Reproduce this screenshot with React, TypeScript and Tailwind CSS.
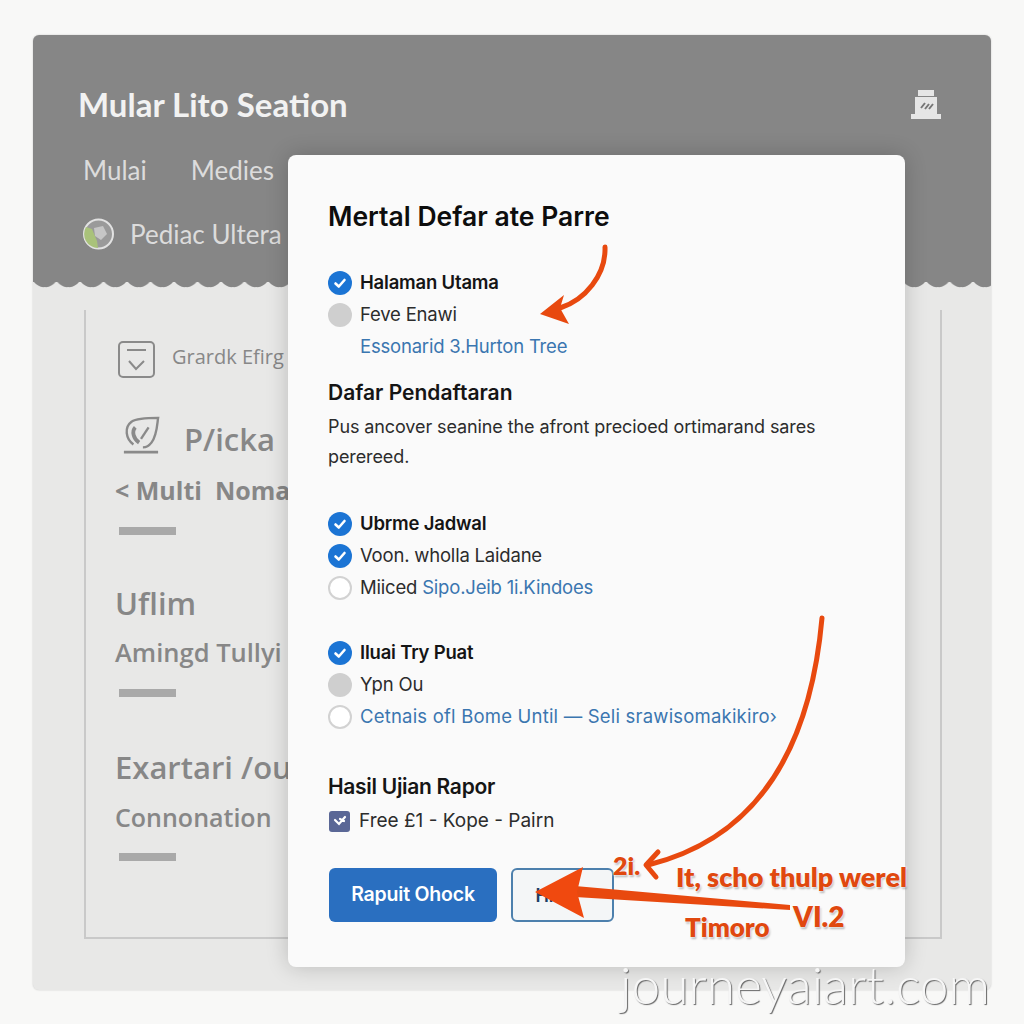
function Check({ kind }: { kind: "on" | "gray" | "off" }) {
  if (kind === "gray") return <span className="w-6 h-6 rounded-full bg-[#cfcfcf] shrink-0" />;
  if (kind === "off") return <span className="w-6 h-6 rounded-full bg-white border-2 border-[#d2d2d2] shrink-0" />;
  return (
    <span className="w-6 h-6 rounded-full bg-[#1b74d4] shrink-0 flex items-center justify-center">
      <svg width="14" height="14" viewBox="0 0 14 14" fill="none" stroke="#fff" strokeWidth="2.6" strokeLinecap="round" strokeLinejoin="round">
        <path d="M2.5 7.5 L5.8 10.5 L11.5 4" />
      </svg>
    </span>
  );
}

function Row({ kind, children, bold }: { kind: "on" | "gray" | "off"; children: React.ReactNode; bold?: boolean }) {
  return (
    <div className={`h-8 flex items-center gap-2 text-[18.5px] tracking-[-0.2px] text-[#2c2c2c] ${bold ? "font-semibold text-[#151515]" : ""}`}>
      <Check kind={kind} />
      <span className="whitespace-nowrap">{children}</span>
    </div>
  );
}

function Bar() {
  return <div className="w-[57px] h-2 bg-[#a9a9a9] ml-1" />;
}

export default function App() {
  const orange = "font-['Lato',sans-serif] font-extrabold text-[#e0480f] [text-shadow:0_0_2px_#fff,0_0_3px_#fff,1px_2px_2px_rgba(0,0,0,0.3)]";
  return (
    <div className="relative w-[1024px] h-[1024px] overflow-hidden bg-[#f8f8f7] pt-[35px] pl-[33px] font-['Inter',sans-serif]">
      <div className="w-[958px] h-[955px] rounded-md overflow-hidden bg-[#e8e8e7] flex flex-col shadow-[0_0_2px_rgba(0,0,0,0.2)]">
        {/* header */}
        <header className="relative h-[247px] shrink-0 bg-[#868686] font-['Lato',sans-serif] pl-[45px]">
          <div className="flex items-center justify-between pr-[50px] pt-[50px]">
            <h1 className="text-[33px] leading-[38px] font-bold text-[#f2f2f2]">Mular Lito Seation</h1>
            <svg width="30" height="30" viewBox="0 0 30 30" fill="#e6e6e6">
              <path d="M7 1 h16 v6 h-16z" />
              <path d="M4 8 h22 v17 h-22z" />
              <path d="M0 25 h30 v5 h-30z" />
              <path d="M10 19 l4 -5 M14 20 l4 -5 M18 20 l4 -5" stroke="#777" strokeWidth="2" />
            </svg>
          </div>
          <nav className="flex gap-[44px] pl-[5px] mt-[32px] text-[26px] leading-[30px] text-[#dcdcdc]">
            <span>Mulai</span>
            <span>Medies</span>
          </nav>
          <div className="flex items-center gap-[16px] pl-[5px] mt-[32px] text-[26px] leading-[34px] text-[#dcdcdc]">
            <svg width="31" height="34" viewBox="0 0 31 34">
              <circle cx="15.5" cy="17" r="14.5" fill="#9a9a9a" stroke="#e2e2e2" strokeWidth="2" />
              <path d="M15 31 A14 14 0 0 1 3 10 L9 12 L14 24Z" fill="#a9c27a" />
              <path d="M11 11 l9 -2 l4 8 l-6 6 l-6 -4z" fill="#c6c6c6" />
            </svg>
            <span className="whitespace-nowrap">Pediac Ultera</span>
          </div>
          <svg className="absolute left-0 -bottom-[6px] w-full h-2" viewBox="0 0 958 8" preserveAspectRatio="none">
            <pattern id="wave" width="23.5" height="8" patternUnits="userSpaceOnUse">
              <path d="M0 0 H23.5 V1 Q17.6 8 11.75 7 Q5.9 8 0 1Z" fill="#868686" />
            </pattern>
            <rect width="958" height="8" fill="url(#wave)" />
          </svg>
        </header>

        {/* body panel behind the dialog */}
        <div className="flex-1 pl-[51px] pr-[49px] pt-[28px] pb-[51px]">
          <div className="h-full border-x-2 border-b-2 border-[#c9c9c9] pl-[29px] pt-[31px] text-[#878787] font-['Open_Sans',sans-serif] overflow-hidden">
            <div className="flex items-center gap-[17px] pl-[3px]">
              <svg width="37" height="37" viewBox="0 0 37 37" fill="none" stroke="#8a8a8a" strokeWidth="2">
                <rect x="1" y="1" width="35" height="35" rx="4" />
                <path d="M9 9 H28 M11 20 L18 28 L26 20" />
              </svg>
              <span className="text-[20px] leading-[24px] pb-[6px] whitespace-nowrap">Grardk Efirg</span>
            </div>
            <div className="flex items-start gap-[24px] pl-[7px] mt-[38px]">
              <svg width="38" height="38" viewBox="0 0 40 40" fill="none" stroke="#8a8a8a" strokeWidth="2.5">
                <path d="M12 30 C4 24 2 12 10 6 C16 2 30 2 38 2 C37 8 37 20 31 28 C28 32 24 33 22 33" />
                <path d="M28 12 L20 24" />
                <path d="M14 12 C10 16 12 24 18 28" strokeWidth="4" />
                <path d="M2 38 H38" strokeWidth="3" />
              </svg>
              <span className="text-[31px] leading-[38px] pt-[4px] font-semibold whitespace-nowrap">P/icka</span>
            </div>
            <div className="mt-[17px] text-[25px] leading-[30px] font-bold whitespace-nowrap">&lt; Multi&nbsp; Noma</div>
            <div className="mt-[22px]"><Bar /></div>
            <div className="mt-[49px] text-[31px] leading-[38px] font-semibold">Uflim</div>
            <div className="mt-[15px] text-[25.5px] leading-[30px] font-semibold whitespace-nowrap">Amingd Tullyi</div>
            <div className="mt-[22px]"><Bar /></div>
            <div className="mt-[51px] text-[31px] leading-[38px] font-semibold whitespace-nowrap">Exartari /our</div>
            <div className="mt-[16px] text-[25px] leading-[30px] font-semibold">Connonation</div>
            <div className="mt-[21px]"><Bar /></div>
          </div>
        </div>
      </div>

      {/* dialog */}
      <div className="absolute left-[288px] top-[155px] w-[617px] h-[812px] rounded-lg bg-[#fafafa] shadow-[0_0_22px_rgba(0,0,0,0.2)] pl-[40px] pt-[45px]">
        <h2 className="text-[26.5px] leading-[32px] font-semibold text-[#0d0d0d]">Mertal Defar ate Parre</h2>
        <div className="mt-[35px]">
          <Row kind="on" bold>Halaman Utama</Row>
          <Row kind="gray">Feve Enawi</Row>
          <div className="h-8 flex items-center pl-8 text-[18.5px] tracking-[-0.2px] text-[#3a76b0]">Essonarid 3.Hurton Tree</div>
        </div>
        <h3 className="mt-[16px] text-[21px] leading-[28px] font-semibold text-[#151515]">Dafar Pendaftaran</h3>
        <p className="mt-[5px] w-[520px] text-[18px] leading-[30px] tracking-[-0.1px] text-[#2c2c2c]">
          Pus ancover seanine the afront precioed ortimarand sares perereed.
        </p>
        <div className="mt-[36px]">
          <Row kind="on" bold>Ubrme Jadwal</Row>
          <Row kind="on">Voon. wholla Laidane</Row>
          <Row kind="off">Miiced <span className="text-[#3a76b0]">Sipo.Jeib 1i.Kindoes</span></Row>
        </div>
        <div className="mt-[33px]">
          <Row kind="on" bold>Iluai Try Puat</Row>
          <Row kind="gray">Ypn Ou</Row>
          <Row kind="off"><span className="text-[#3a76b0] tracking-[0.2px]">Cetnais ofl Bome Until — Seli srawisomakikiro›</span></Row>
        </div>
        <h3 className="mt-[40px] text-[21px] leading-[28px] font-semibold text-[#151515] tracking-[-0.3px]">Hasil Ujian Rapor</h3>
        <div className="mt-[4px] h-8 flex items-center gap-[9px] text-[19px] text-[#2c2c2c] pl-[1px]">
          <span className="w-[21px] h-[21px] rounded-[3px] bg-[#5a6796] flex items-center justify-center shrink-0">
            <svg width="14" height="14" viewBox="0 0 14 14" fill="none" stroke="#fff" strokeWidth="2.2" strokeLinecap="round">
              <path d="M2 6 L6 10 L12 3 M7 5 L11 7" />
            </svg>
          </span>
          Free £1 - Kope - Pairn
        </div>
        <div className="mt-[31px] flex gap-[14px] pl-[1px]">
          <button className="w-[168px] h-[54px] rounded-md bg-[#2a6fc0] text-white text-[19.5px] font-semibold tracking-[-0.2px]">Rapuit Ohock</button>
          <button className="w-[103px] h-[54px] rounded-md bg-[#f4f6f7] border-2 border-[#4d80ad] text-[#1d3f66] text-[18px] font-semibold pr-[36px]">Hi</button>
        </div>
      </div>

      {/* annotation arrows */}
      <svg className="absolute inset-0 pointer-events-none" width="1024" height="1024" viewBox="0 0 1024 1024" fill="none">
        <path d="M605 247 C606 275 585 300 560 308" stroke="#e8490f" strokeWidth="5" strokeLinecap="round" />
        <path d="M540 314 L564 295 L560 308 L569 324Z" fill="#e8490f" />
        <path d="M822 618 C812 730 770 835 648 865" stroke="#e8490f" strokeWidth="5" strokeLinecap="round" />
        <path d="M658 852 L646 865 L656 877" stroke="#e8490f" strokeWidth="5" strokeLinecap="round" strokeLinejoin="round" />
        <path d="M575 886 L790 905 L790 910 L575 897Z" fill="#e8490f" />
        <path d="M535 892 L583 867 L577 892 L584 918Z" fill="#f0490f" />
      </svg>

      {/* annotation labels */}
      <span className={`absolute left-[613px] top-[850px] text-[25px] leading-[30px] ${orange}`}>2i.</span>
      <span className={`absolute left-[676px] top-[861px] text-[27px] leading-[32px] whitespace-nowrap ${orange}`}>It, scho thulp werel</span>
      <span className={`absolute left-[793px] top-[900px] text-[28px] leading-[32px] ${orange}`}>VI.2</span>
      <span className={`absolute left-[685px] top-[911px] text-[26px] leading-[32px] ${orange}`}>Timoro</span>

      {/* watermark */}
      <span className="absolute left-[620px] top-[952px] text-[51.5px] leading-[64px] font-['Lato',sans-serif] font-light text-[#f6f6f6] [text-shadow:1px_1px_1px_#666] whitespace-nowrap">journeyaiart.com</span>
    </div>
  );
}
